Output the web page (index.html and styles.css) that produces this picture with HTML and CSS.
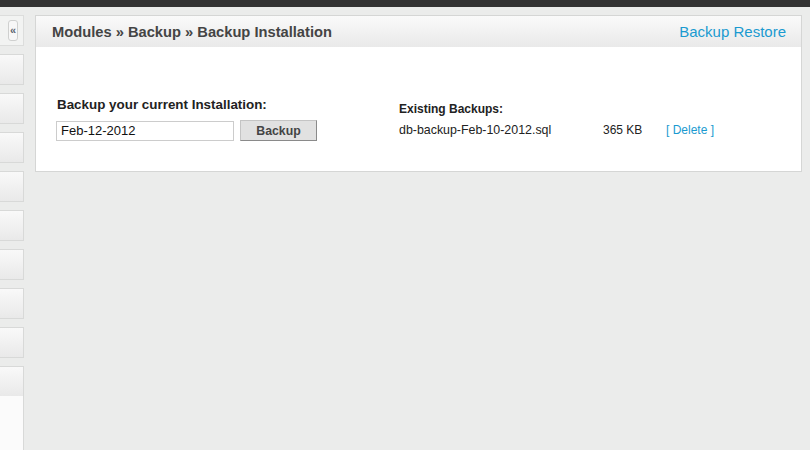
FILE: index.html
```html
<!DOCTYPE html>
<html>
<head>
<meta charset="utf-8">
<link rel="stylesheet" href="styles.css">
</head>
<body>
<div class="topbar"></div>
<div class="layout">
  <aside class="sidebar">
    <div class="side-top"><span class="collapse">&laquo;</span></div>
    <div class="side-item"></div>
    <div class="side-item"></div>
    <div class="side-item"></div>
    <div class="side-item"></div>
    <div class="side-item"></div>
    <div class="side-item"></div>
    <div class="side-item"></div>
    <div class="side-item"></div>
    <div class="side-item side-last"><div class="side-last-head"></div></div>
  </aside>
  <main class="panel">
    <div class="panel-head">
      <h1 class="crumbs">Modules &raquo; Backup &raquo; Backup Installation</h1>
      <a class="head-link" href="#">Backup Restore</a>
    </div>
    <div class="panel-body">
      <div class="col col-left">
        <div class="label label-big">Backup your current Installation:</div>
        <div class="form-row">
          <input class="text-input" type="text" value="Feb-12-2012">
          <button class="btn">Backup</button>
        </div>
      </div>
      <div class="col col-right">
        <div class="label">Existing Backups:</div>
        <div class="backup-row">
          <span class="file">db-backup-Feb-10-2012.sql</span>
          <span class="size">365 KB</span>
          <a class="del" href="#">[ Delete ]</a>
        </div>
      </div>
    </div>
  </main>
</div>
</body>
</html>
```
FILE: styles.css
```css
html, body {
  margin: 0;
  padding: 0;
  height: 100%;
  background: #ebeceb;
  font-family: "Liberation Sans", Arial, sans-serif;
  overflow: hidden;
}
.topbar {
  height: 7px;
  background: #333333;
}
.layout {
  display: flex;
  align-items: flex-start;
  padding-top: 8px;
}
.sidebar {
  width: 24px;
  flex: none;
  display: flex;
  flex-direction: column;
}
.side-top {
  box-sizing: border-box;
  height: 31px;
  border: 1px solid #dcdddc;
  border-left: none;
  background: #f2f3f2;
  padding: 4px 0 0 8px;
}
.collapse {
  display: flex;
  align-items: center;
  justify-content: center;
  box-sizing: border-box;
  width: 10px;
  height: 21px;
  border: 1px solid #cfd0cf;
  border-radius: 3px;
  background: #f7f7f7;
  color: #5a6470;
  font-size: 11px;
  font-weight: bold;
  line-height: 1;
}
.side-item {
  box-sizing: border-box;
  height: 31px;
  margin-top: 8px;
  border: 1px solid #d8d9d8;
  border-left: none;
  background: linear-gradient(#f9f9f9, #e9e9e9);
}
.side-last {
  height: 90px;
  background: #fbfbfb;
  border-bottom: none;
}
.side-last-head {
  height: 29px;
  background: linear-gradient(#f9f9f9, #e9e9e9);
}
.panel {
  margin-left: 11px;
  width: 767px;
  box-sizing: border-box;
  border: 1px solid #d5d6d5;
  background: #ffffff;
}
.panel-head {
  display: flex;
  align-items: center;
  justify-content: space-between;
  height: 31px;
  padding: 0 15px 0 16px;
  background: linear-gradient(#fafafa, #e9e9e9);
}
.crumbs {
  margin: 0;
  font-size: 14.7px;
  font-weight: bold;
  color: #444444;
}
.head-link {
  font-size: 15px;
  color: #1a9ad0;
  text-decoration: none;
}
.panel-body {
  display: flex;
  padding: 50px 0 30px 21px;
  height: 44px;
}
.col-left {
  width: 342px;
}
.label {
  font-size: 12px;
  font-weight: bold;
  color: #222222;
  height: 15px;
  line-height: 15px;
  margin-top: 5px;
  margin-bottom: 6px;
}
.label.label-big {
  font-size: 13.4px;
  height: 16px;
  line-height: 16px;
  margin-top: 0;
  margin-bottom: 7px;
}
.form-row {
  display: flex;
  align-items: center;
  gap: 6px;
}
.text-input {
  box-sizing: border-box;
  width: 178px;
  height: 20px;
  margin: 0 0 0 -1px;
  border: 1px solid #cccccc;
  padding: 0 4px;
  font-family: "Liberation Sans", Arial, sans-serif;
  font-size: 13px;
  color: #111111;
  outline: none;
}
.btn {
  box-sizing: border-box;
  width: 77px;
  height: 21px;
  margin: 0;
  padding: 0;
  border: 1px solid #c4c4c4;
  border-right-color: #8a8a8a;
  border-bottom-color: #8a8a8a;
  background: #e1e1e1;
  font-family: "Liberation Sans", Arial, sans-serif;
  font-size: 12.3px;
  font-weight: bold;
  color: #444444;
}
.backup-row {
  display: flex;
  font-size: 12px;
  line-height: 14px;
  color: #222222;
}
.file {
  width: 204px;
  font-size: 12.4px;
}
.size {
  width: 63px;
}
.del {
  color: #1a9ad0;
  text-decoration: none;
}
```
